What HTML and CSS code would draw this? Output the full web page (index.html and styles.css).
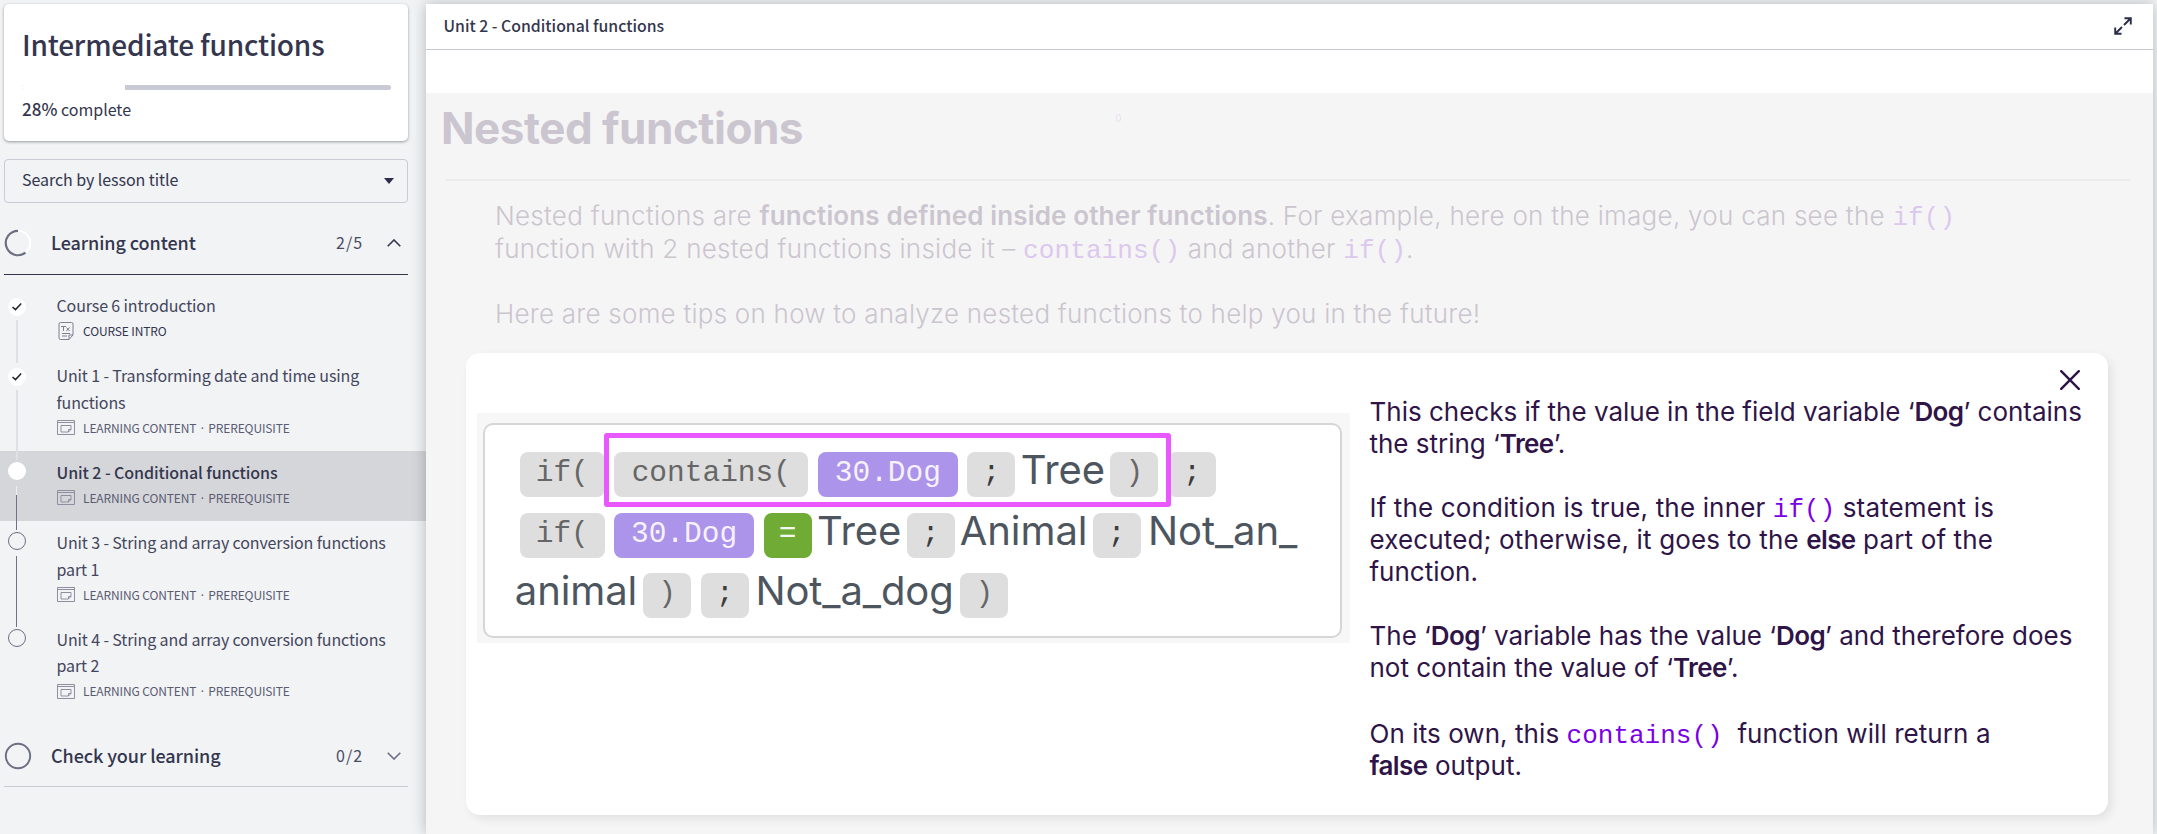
FILE: index.html
```html
<!DOCTYPE html>
<html lang="en">
<head>
<meta charset="utf-8">
<title>Intermediate functions</title>
<link rel="stylesheet" href="styles.css">
</head>
<body>
<svg width="0" height="0" class="defs">
  <symbol id="window" viewBox="0 0 18 15"><path d="M.5.5h17v14H.5zM.5 2.500h17M4 5.500h10v4l-2.500 2.500H4zM14 9.500h-2.500V12" fill="none" stroke="currentColor"/></symbol>
  <symbol id="check" viewBox="0 0 18 18"><path d="M4.500 9l3 2.600 5.700-6" fill="none" stroke="#20242e" stroke-width="1.500"/></symbol>
</svg>
<div class="app">
  <aside class="sidebar">
    <section class="summary">
      <h1>Intermediate functions</h1>
      <div class="progress"><div class="progress-done"></div></div>
      <p><b>28%</b> complete</p>
    </section>
    <div class="search"><span>Search by lesson title</span><i class="caret"></i></div>
    <div class="section-head open">
      <svg class="ring" viewBox="0 0 28 28"><circle cx="14" cy="14" r="12.200" fill="none" stroke="#fff" stroke-width="2"/><path d="M14 1.800A12.200 12.200 0 1 0 21.500 23.600" fill="none" stroke="#6b6f83" stroke-width="2.200"/></svg>
      <h2>Learning content</h2><span class="count">2/5</span>
      <svg class="chev" viewBox="0 0 14 8"><path d="M.700 7.300 7 1l6.300 6.300" fill="none" stroke="#34364e" stroke-width="1.600"/></svg>
    </div>
    <ol class="lessons">
      <li class="lesson">
        <div class="track done"><svg class="dot"><use href="#check"/></svg><i class="link"></i></div>
        <div class="info"><h3>Course 6 introduction</h3>
          <p class="meta dark"><svg class="doc" viewBox="0 0 16 18"><path d="M2.500.5h11q1.500 0 1.500 1.500v11l-4 4.500H2.500Q1 17.500 1 16V2Q1 .5 2.500.5zM15 13h-4v4.500M4 11.500h8M4 14h5M3 4.500h5M5.500 4.500V9M8.500 5.500l3 3.500M11.500 5.500l-3 3.500" fill="none" stroke="currentColor"/></svg><span>COURSE INTRO</span></p></div>
      </li>
      <li class="lesson">
        <div class="track done"><svg class="dot"><use href="#check"/></svg><i class="link"></i></div>
        <div class="info"><h3>Unit 1 - Transforming date and time using<br>functions</h3>
          <p class="meta"><svg class="win"><use href="#window"/></svg><span>LEARNING CONTENT <span class="sep">·</span> PREREQUISITE</span></p></div>
      </li>
      <li class="lesson current">
        <div class="track"><i class="dot"></i><i class="link"></i></div>
        <div class="info"><h3>Unit 2 - Conditional functions</h3>
          <p class="meta"><svg class="win"><use href="#window"/></svg><span>LEARNING CONTENT <span class="sep">·</span> PREREQUISITE</span></p></div>
      </li>
      <li class="lesson">
        <div class="track"><i class="dot"></i><i class="link"></i></div>
        <div class="info"><h3>Unit 3 - String and array conversion functions<br>part 1</h3>
          <p class="meta"><svg class="win"><use href="#window"/></svg><span>LEARNING CONTENT <span class="sep">·</span> PREREQUISITE</span></p></div>
      </li>
      <li class="lesson">
        <div class="track"><i class="dot"></i></div>
        <div class="info"><h3>Unit 4 - String and array conversion functions<br>part 2</h3>
          <p class="meta"><svg class="win"><use href="#window"/></svg><span>LEARNING CONTENT <span class="sep">·</span> PREREQUISITE</span></p></div>
      </li>
    </ol>
    <div class="section-head closed">
      <svg class="ring" viewBox="0 0 28 28"><circle cx="14" cy="14" r="12.200" fill="none" stroke="#6b6f83" stroke-width="2"/></svg>
      <h2>Check your learning</h2><span class="count">0/2</span>
      <svg class="chev" viewBox="0 0 14 8"><path d="M.700.700 7 7 13.300.700" fill="none" stroke="#6b6f83" stroke-width="1.600"/></svg>
    </div>
  </aside>
  <main class="viewer">
    <header class="viewer-head"><span>Unit 2 - Conditional functions</span>
      <svg class="expand" viewBox="0 0 18 18"><path d="M10 8l6.500-6.500M10.500 1.200h6.300v6.300M8 10l-6.500 6.500M1.200 10.500v6.300h6.300" fill="none" stroke="#2b2d4a" stroke-width="1.900"/></svg>
    </header>
    <div class="slide">
      <div class="slide-title"><h2>Nested functions</h2><i class="speck"></i></div>
      <div class="intro">
        <span class="line">Nested functions are <b>functions defined inside other functions</b>. For example, here on the image, you can see the <code>if()</code></span>
        <span class="line">function with 2 nested functions inside it – <code>contains()</code> and another <code>if()</code>.</span>
        <span class="line gap">Here are some tips on how to analyze nested functions to help you in the future!</span>
      </div>
      <section class="modal">
        <div class="figure">
          <div class="formula">
            <div class="row"><span class="tok fn">if(</span><span class="tok contains">contains(</span><span class="tok ref">30.Dog</span><span class="tok semi">;</span><span class="word tree">Tree</span><span class="tok">)</span><span class="tok semi">;</span></div>
            <div class="row"><span class="tok fn">if(</span><span class="tok ref">30.Dog</span><span class="tok eq">=</span><span class="word tree">Tree</span><span class="tok semi">;</span><span class="word animal">Animal</span><span class="tok semi">;</span><span class="word not-an">Not_an_</span></div>
            <div class="row last"><span class="word animal-end">animal</span><span class="tok">)</span><span class="tok semi">;</span><span class="word not-dog">Not_a_dog</span><span class="tok">)</span></div>
            <div class="highlight"></div>
          </div>
        </div>
        <div class="explain">
          <p><span class="line tight">This checks if the value in the field variable ‘<b>Dog</b>’ contains</span><span class="line tight">the string ‘<b>Tree</b>’.</span></p>
          <p><span class="line">If the condition is true, the inner <code>if()</code> statement is</span><span class="line">executed; otherwise, it goes to the <b>else</b> part of the</span><span class="line tight">function.</span></p>
          <p><span class="line tight">The ‘<b>Dog</b>’ variable has the value ‘<b>Dog</b>’ and therefore does</span><span class="line tight">not contain the value of ‘<b>Tree</b>’.</span></p>
          <p class="result"><span class="line">On its own, this <code>contains()</code>&nbsp; function will return a</span><span class="line"><b>false</b> output.</span></p>
        </div>
        <svg class="close" viewBox="0 0 20 20"><path d="M1.200 1.200l17.600 17.600M18.800 1.200L1.200 18.800" stroke="#2f1547" stroke-width="2.400" stroke-linecap="round"/></svg>
      </section>
    </div>
  </main>
</div>
</body>
</html>
```
FILE: styles.css
```css
* { box-sizing: border-box; }
body { margin: 0; width: 2157px; height: 834px; overflow: hidden; background: #f1f3f5; color: #34364e; font-family: "Noto Sans CJK SC", "Noto Sans", sans-serif; }
h1, h2, h3, p, ol { margin: 0; padding: 0; font-weight: 400; }
i { display: block; }
.defs { position: absolute; }
.app { display: flex; height: 834px; }
.sidebar { width: 426px; flex: none; padding-top: 4px; }
.summary { margin-left: 4px; width: 404px; height: 137px; padding: 0 17px 0 18px; background: #fff; border-radius: 5px; box-shadow: 0 1px 3px rgba(60, 60, 60, .5); }
.summary h1 { height: 81px; line-height: 80px; font-size: 28px; font-weight: 500; letter-spacing: -.18px; white-space: nowrap; }
.progress { height: 5px; background: #c8cbd6; border-radius: 3px; overflow: hidden; }
.progress-done { width: 103px; height: 5px; background: #fff; }
.summary p { font-size: 16px; line-height: 38px; }
.summary b { font-weight: 500; font-size: 17px; }
.search { display: flex; align-items: center; justify-content: space-between; margin: 18px 0 0 4px; width: 404px; height: 44px; padding: 0 13px 4px 17px; border: 1px solid #c8cbd6; border-radius: 4px; font-size: 16px; letter-spacing: -.06px; }
.caret { border: 5px solid transparent; border-top: 6px solid #2b2d4a; border-bottom: 0; margin-top: 3px; }
.section-head { display: flex; align-items: center; margin-left: 4px; width: 404px; height: 72px; border-bottom: 1px solid #34364e; padding-right: 7px; }
.section-head h2 { flex: 1; font-size: 18px; font-weight: 500; letter-spacing: -.08px; margin: -2px 0 0 19px; }
.section-head.open { padding-top: 8px; }
.ring { width: 28px; height: 28px; }
.count { width: 51px; margin-top: -2px; font-size: 16px; letter-spacing: 1px; color: #4a4c62; }
.chev { width: 14px; height: 8px; }
.section-head.closed { border-color: #c8cbd0; height: 61px; margin-top: 12px; }
.lessons { list-style: none; padding-top: 8.500px; }
.lesson { display: flex; padding-top: 14px; height: 70.500px; }
.lesson:nth-child(2), .lesson:nth-child(4), .lesson:nth-child(5) { height: 96.500px; }
.lesson.current { background: #d5d6da; }
.track { display: flex; flex-direction: column; align-items: center; width: 33px; flex: none; margin-top: -3px; }
.track.done { margin-top: 0; }
.dot { display: block; flex: none; width: 18px; height: 18px; border: 1.500px solid #6b6f83; border-radius: 50%; }
.done .dot, .current .dot { border: 0; background: #fff; }
.link { flex: 1; width: 1.500px; margin: 6px 0 -9px; background: #6f7285; }
.done .link { background: #dfe0e4; width: 2px; margin-top: 4px; }
.current .link { background: linear-gradient(#eee 9px, #6f7285 9px); }
.info { margin: -6px 0 0 23.500px; white-space: nowrap; }
.info h3 { font-size: 16px; line-height: 26.500px; letter-spacing: -.12px; color: #44465c; }
.current .info h3 { font-weight: 500; letter-spacing: -.08px; color: #34364e; }
.meta { display: flex; align-items: center; gap: 8.500px; margin-top: 1.500px; font-size: 12px; line-height: 22px; letter-spacing: -.12px; color: #5a5c72; }
.meta.dark { color: #34364e; }
.sep { font-family: "Noto Sans", sans-serif; margin: 0 1.800px; line-height: 1; }
.win { width: 18px; height: 15px; color: #8d8fa0; }
.doc { width: 18px; height: 18px; color: #7c8092; }

.viewer { width: 1727px; height: 830px; margin-top: 4px; background: #fff; box-shadow: 0 0 14px rgba(0, 0, 0, .25); }
.viewer-head { display: flex; align-items: center; justify-content: space-between; height: 46px; padding: 0 21px 2px 17.500px; border-bottom: 1px solid #c8c9ce; font-size: 15.800px; font-weight: 500; }
.expand { width: 18px; height: 18px; }
.slide { margin-top: 43px; height: 741px; background: #f5f5f5; font-family: Inter, "Liberation Sans", sans-serif; color: #cbc5cf; }
.slide-title { display: flex; margin: 0 22px 0 19px; height: 88px; border-bottom: 2px solid #ebebeb; }
.slide-title h2 { width: 675px; margin-left: -4px; font-size: 44px; line-height: 71px; font-weight: 700; letter-spacing: -.480px; }
.speck { width: 5px; height: 8px; border: 1px solid #eadff0; border-radius: 50%; margin-top: 21px; }
.line { display: block; white-space: nowrap; }
.intro { padding: 18px 0 0 69px; font-size: 26px; line-height: 33px; font-weight: 300; height: 172px; letter-spacing: .270px; }
.intro .line { height: 33px; }
.intro .gap { margin-top: 32px; letter-spacing: .240px; }
.intro b, .explain b { font-weight: 600; }
.intro b { letter-spacing: .140px; }
.intro code { letter-spacing: .1px; color: #dcc8ee; }
code { font-family: "Liberation Mono", monospace; line-height: 0; }
.modal { position: relative; display: flex; margin-left: 40px; width: 1642px; height: 462px; background: #fff; border-radius: 14px; box-shadow: 4px 4px 10px rgba(0, 0, 0, .08); color: #2f1547; }
.figure { width: 873px; height: 230px; margin: 60px 0 0 11px; padding: 10px 8px 5px 6px; background: #f7f7f7; }
.formula { position: relative; height: 215px; border: 2px solid #d6d6d6; border-radius: 10px; background: #fff; padding: 27px 0 0 35px; }
.row { display: flex; gap: 9.800px; height: 45px; margin-bottom: 15.500px; }
.row.last { margin-left: -11px; }
.tok { width: 48px; height: 45px; border-radius: 8px; background: #dedede; color: #666; font: 29.500px/43px "Liberation Mono", monospace; text-align: center; }
.fn { width: 84.500px; }
.semi { color: #3c3c3c; }
.contains { width: 194px; }
.ref { width: 139.500px; background: #ac94ea; color: #f6f2fd; }
.eq { background: #70ab35; color: #f3f8ee; }
.word { margin: 0 -9.800px; text-align: center; font-size: 40px; line-height: 36px; letter-spacing: -.1px; color: #4d565f; white-space: nowrap; }
.tree { width: 95px; }
.animal { width: 138px; }
.not-an { width: 164px; }
.animal-end { width: 134px; margin-left: 0; }
.not-dog { width: 211.500px; }
.highlight { position: absolute; left: 118.500px; top: 8px; width: 567px; height: 74px; border: 5px solid #e957ff; border-radius: 3px; }
.explain { padding: 43px 0 0 19.500px; font-size: 26px; line-height: 32.300px; font-weight: 300; letter-spacing: .150px; }
.explain .line { height: 32.300px; }
.explain .tight { letter-spacing: -.010px; }
.explain p { margin-bottom: 31.200px; }
.explain .result { margin-top: 33.500px; letter-spacing: .070px; }
.explain b { letter-spacing: -.6px; }
.explain code { letter-spacing: 0; color: #7a00e6; }
.close { position: absolute; right: 28px; top: 17px; width: 20px; height: 20px; }
```
